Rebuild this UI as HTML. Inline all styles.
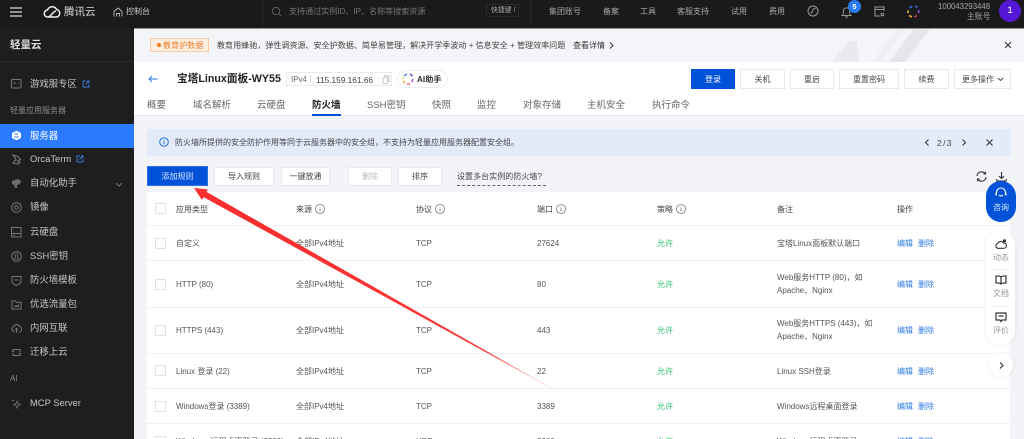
<!DOCTYPE html>
<html lang="zh"><head><meta charset="utf-8"><title>轻量云</title>
<style>
html,body{margin:0;padding:0;width:1024px;height:439px;overflow:hidden;background:#f2f4f8}
body{position:relative;font-family:"Liberation Sans","Noto Sans CJK SC",sans-serif;font-size:8px;color:#4b4b4b}
.a{position:absolute}
.t{position:absolute;line-height:20px;height:20px;white-space:nowrap}
.n{color:#c9c9c9;font-size:8px}
.s{color:#c6c6c6;font-size:9.4px}
.g{color:#8a8a8a;font-size:8px}
.tab{color:#666;font-size:9.5px}
.b{position:absolute;box-sizing:border-box;background:#fff;border:1px solid #e6e9f0;text-align:center;color:#444;font-size:8px;white-space:nowrap;padding-top:1px}
.h{color:#444;margin-top:1px}
.c{color:#555;margin-top:1px}
.ok{color:#2fc56e;margin-top:1px}
.l{color:#2f7ae5;margin-top:1px}
.cb{position:absolute;box-sizing:border-box;left:155px;width:11px;height:11px;background:#fff;border:1px solid #dfe2e9}
.line{position:absolute;left:147px;width:863px;height:1px;background:#eff1f5}
svg{position:absolute;overflow:visible}
</style></head><body>

<!-- top bar -->
<div class="a" style="left:0;top:0;width:1024px;height:28px;background:#1a1a1a"></div>
<div class="a" style="left:134px;top:28px;width:890px;height:1px;background:#8f9296"></div>
<div class="a" style="left:262px;top:0;width:1px;height:28px;background:#262626"></div>
<div class="a" style="left:530px;top:0;width:1px;height:28px;background:#262626"></div>
<svg style="left:10px;top:7px" width="13" height="10"><path d="M0 1h12M0 5h12M0 9h12" stroke="#ddd" stroke-width="1.2"/></svg>
<svg style="left:43px;top:5px" width="18" height="13" viewBox="0 0 18 13"><path d="M5 12a3.5 3.5 0 0 1-.5-7A5 5 0 0 1 13.6 4.500A3.800 3.800 0 0 1 13.500 12H5zM5 12c3-.2 5-6 8-6" fill="none" stroke="#eee" stroke-width="1.500"/></svg>
<span class="t" style="left:64px;top:2px;font-size:10.500px;color:#ddd">腾讯云</span>
<svg style="left:113px;top:7px" width="10" height="10" viewBox="0 0 10 10"><path d="M1 9.500V4.500L5 1l4 3.500v5M3.500 9.500V6.500h3v3" fill="none" stroke="#bbb" stroke-width=".9"/></svg>
<span class="t n" style="left:126px;top:2px">控制台</span>
<svg style="left:271px;top:6px" width="11" height="11" viewBox="0 0 11 11"><circle cx="5" cy="5" r="3.700" fill="none" stroke="#666" stroke-width=".9"/><path d="M8 8l2 2" stroke="#666" stroke-width=".9"/></svg>
<span class="t" style="left:289px;top:2px;color:#777;font-size:8.050px">支持通过实例ID、IP、名称等搜索资源</span>
<div class="a" style="left:486px;top:4px;width:33px;height:13px;border:1px solid #2a2a2a;box-sizing:border-box"></div>
<span class="t" style="left:491px;top:1px;color:#aaa;font-size:6.900px">快捷键 /</span>
<span class="t n" style="left:549px;top:2px;color:#aaa">集团账号</span>
<span class="t n" style="left:603px;top:2px;color:#aaa">备案</span>
<span class="t n" style="left:640px;top:2px;color:#aaa">工具</span>
<span class="t n" style="left:677px;top:2px;color:#aaa">客服支持</span>
<span class="t n" style="left:731px;top:2px;color:#aaa">试用</span>
<span class="t n" style="left:769px;top:2px;color:#aaa">费用</span>
<svg style="left:807px;top:5px" width="12" height="12" viewBox="0 0 12 12"><circle cx="6" cy="6" r="5" fill="none" stroke="#999"/><path d="M3.500 8c1.500 0 1.500-1 2.300-3C6.200 4 7 3.500 8.500 3.500" fill="none" stroke="#999"/></svg>
<svg style="left:841px;top:6px" width="11" height="12" viewBox="0 0 11 12"><path d="M1 9.500h9L8.700 8V5a3.200 3.200 0 0 0-6.400 0v3zM4 11h3" fill="none" stroke="#999" stroke-width=".9"/></svg>
<div class="a" style="left:848px;top:0;width:13px;height:13px;border-radius:50%;background:#2a7bf2;color:#fff;font-size:7.500px;font-weight:bold;line-height:13px;text-align:center">5</div>
<svg style="left:874px;top:6px" width="11" height="11" viewBox="0 0 11 11"><path d="M10 5V1H1v9h5.500M1 3.500h9" fill="none" stroke="#999"/><circle cx="8.500" cy="8.500" r="1.300" fill="none" stroke="#999"/></svg>
<svg style="left:907px;top:5px" width="13" height="13" viewBox="0 0 13 13" fill="none" stroke-width="1.600"><path d="M5 1.500L2.500 3" stroke="#3d7bf0"/><path d="M8 1l2.500 1.500" stroke="#4a62e0"/><path d="M12 5l-.5 3" stroke="#8a4ae0"/><path d="M10 10.500L7.500 12" stroke="#e04a6a"/><path d="M5 12l-3-1.500" stroke="#f0a030"/><path d="M1 8V5.500" stroke="#f0c040"/></svg>
<span class="t" style="left:938px;top:-3px;color:#a8a8a8;font-size:7.800px">100043293448</span>
<span class="t" style="left:967px;top:7px;color:#a8a8a8;font-size:7.800px">主账号</span>
<div class="a" style="left:999px;top:0;width:22px;height:22px;border-radius:50%;background:#5518d6;color:#fff;font-size:9.500px;line-height:22px;text-align:center">1</div>

<!-- sidebar -->
<div class="a" style="left:0;top:28px;width:134px;height:411px;background:#1e1e1e"></div>
<div class="a" style="left:0;top:61px;width:134px;height:1px;background:#2c2c2c"></div>
<span class="t" style="left:10px;top:35px;color:#ddd;font-size:10.500px;font-weight:bold">轻量云</span>
<svg style="left:11px;top:79px" width="11" height="10" viewBox="0 0 11 10"><rect x=".5" y=".5" width="9.500" height="8.500" rx="1" fill="none" stroke="#777"/><path d="M2.500 4h2M3.500 3v2M7 4h1" stroke="#777" stroke-width=".8"/></svg>
<span class="t s" style="left:30px;top:74px">游戏服专区</span>
<svg style="left:82px;top:80px" width="8" height="8" viewBox="0 0 8 8"><path d="M4 1H1v6h6V4M3.500 4.500L7 1M5 1h2v2" fill="none" stroke="#3a7de0" stroke-width=".9"/></svg>
<span class="t" style="left:10px;top:101px;color:#8a8a8a;font-size:8px">轻量应用服务器</span>
<div class="a" style="left:0;top:124px;width:134px;height:24px;background:#2a7bff"></div>
<svg style="left:11px;top:130px" width="11" height="11" viewBox="0 0 11 11"><path d="M5.500.8L10 3v5L5.500 10.300 1 8V3z" fill="#fff"/><path d="M3.500 4h4M3.500 6.500c1 1 3 1 4 0" stroke="#2a7bff" stroke-width="1" fill="none"/></svg>
<span class="t" style="left:30px;top:126px;color:#fff;font-size:9.400px">服务器</span>
<svg style="left:12px;top:154px" width="10" height="11" viewBox="0 0 10 11"><path d="M1 1l5 1.500 2.500 3L5.500 7 8 8.500 6 10 1 9l3-3.500z" fill="none" stroke="#777" stroke-width="1.100"/></svg>
<span class="t s" style="left:30px;top:149px">OrcaTerm</span>
<svg style="left:76px;top:155px" width="8" height="8" viewBox="0 0 8 8"><path d="M4 1H1v6h6V4M3.500 4.500L7 1M5 1h2v2" fill="none" stroke="#3a7de0" stroke-width=".9"/></svg>
<svg style="left:11px;top:178px" width="11" height="11" viewBox="0 0 11 11"><path d="M1 3l6-2 3 2-1 3-3 1v3L4 10 3 7 1 6z" fill="#6d6d6d"/></svg>
<span class="t s" style="left:30px;top:173px">自动化助手</span>
<svg style="left:115px;top:182px" width="8" height="5" viewBox="0 0 8 5"><path d="M1 1l3 3 3-3" fill="none" stroke="#777"/></svg>
<svg style="left:11px;top:202px" width="11" height="11" viewBox="0 0 11 11"><circle cx="5.500" cy="5.500" r="4.800" fill="none" stroke="#777"/><circle cx="5.500" cy="5.500" r="1.800" fill="none" stroke="#777"/></svg>
<span class="t s" style="left:30px;top:197px">镜像</span>
<svg style="left:11px;top:227px" width="11" height="11" viewBox="0 0 11 11"><rect x=".5" y=".5" width="9.500" height="9.500" fill="none" stroke="#777"/><path d="M.5 6.500h9.500M2 8.300h2" stroke="#777"/></svg>
<span class="t s" style="left:30px;top:222px">云硬盘</span>
<svg style="left:11px;top:251px" width="11" height="11" viewBox="0 0 11 11"><circle cx="5.500" cy="5.500" r="4.800" fill="none" stroke="#777"/><path d="M3.500 8h4L6.500 5.500a1.500 1.500 0 1 0-2 0z" fill="none" stroke="#777" stroke-width=".8"/></svg>
<span class="t s" style="left:30px;top:246px">SSH密钥</span>
<svg style="left:11px;top:275px" width="11" height="11" viewBox="0 0 11 11"><path d="M1 1.500h9V6c0 2-2 3.500-4.500 4.500C3 9.500 1 8 1 6z" fill="none" stroke="#777"/><path d="M3.500 5h4" stroke="#777"/></svg>
<span class="t s" style="left:30px;top:270px">防火墙模板</span>
<svg style="left:11px;top:299px" width="11" height="11" viewBox="0 0 11 11"><path d="M1 2h3.500l1 1.300H10V10H1z" fill="none" stroke="#777"/><path d="M3 8l2-2 1 1 2-2v3z" fill="#777"/></svg>
<span class="t s" style="left:30px;top:294px">优选流量包</span>
<svg style="left:11px;top:323px" width="11" height="11" viewBox="0 0 11 11"><path d="M3.500 9A3 3 0 0 1 3 3.200a3 3 0 0 1 5.500.3A2.800 2.800 0 0 1 8 9M5.500 10V5.500M4 7l1.500-1.500L7 7" fill="none" stroke="#777"/></svg>
<span class="t s" style="left:30px;top:318px">内网互联</span>
<svg style="left:11px;top:347px" width="11" height="11" viewBox="0 0 11 11"><path d="M2 4.500V2.500h7V5M9 6.500v2H2V6M1 5l1-1 1 1M8 6l1 1 1-1" fill="none" stroke="#777"/></svg>
<span class="t s" style="left:30px;top:342px">迁移上云</span>
<span class="t" style="left:10px;top:369px;color:#8a8a8a;font-size:8px">AI</span>
<svg style="left:11px;top:398px" width="11" height="11" viewBox="0 0 11 11"><path d="M6 3l1 2.500L9.500 6.500 7 7.500 6 10 5 7.500 2.500 6.500 5 5.500zM2 1.500v2M1 2.500h2" fill="none" stroke="#777" stroke-width=".8"/></svg>
<span class="t s" style="left:30px;top:393px">MCP Server</span>
<span class="t" style="left:10px;top:428px;color:#8a8a8a;font-size:8px">组织协作</span>
<div class="a" style="left:0;top:432px;width:134px;height:7px;background:#1e1e1e"></div>

<!-- banner -->
<div class="a" style="left:134px;top:29px;width:890px;height:33px;background:#f4f5f8;overflow:hidden">
<svg style="left:620px;top:0" width="200" height="33"><path d="M78 33l16-20 9-2 2 22z" fill="#e9eaee"/><path d="M135 33L160 0h16l-25 33z" fill="#e4e6ea"/><path d="M118 33L143 0h8l-25 33z" fill="#eeeff2"/></svg>
</div>
<div class="a" style="left:150px;top:38px;width:59px;height:14px;box-sizing:border-box;background:#fdeee2;border:1px solid #f8c9a3"></div>
<div class="a" style="left:157px;top:43px;width:4px;height:4px;border-radius:50%;background:#ee7a22"></div>
<span class="t" style="left:163px;top:36px;color:#e8802f;font-size:8.100px">教育护数据</span>
<span class="t" style="left:217px;top:36px;color:#444;font-size:8.050px">教育用蜂驰，弹性调资源、安全护数据、简单易管理，解决开学季波动 + 信息安全 + 管理效率问题</span>
<span class="t" style="left:573px;top:36px;color:#333;font-size:8px">查看详情</span>
<svg style="left:609px;top:42px" width="5" height="7" viewBox="0 0 5 7"><path d="M1 .5l3 3-3 3" fill="none" stroke="#333"/></svg>
<svg style="left:1004px;top:41px" width="8" height="8" viewBox="0 0 8 8"><path d="M1 1l6 6M7 1L1 7" stroke="#333" stroke-width="1.100"/></svg>

<!-- header -->
<div class="a" style="left:134px;top:62px;width:890px;height:53px;background:#fff"></div>
<div class="a" style="left:134px;top:115px;width:890px;height:1px;background:#e8eaef"></div>
<svg style="left:148px;top:75px" width="10" height="8" viewBox="0 0 10 8"><path d="M9.500 4H1M4 1L1 4l3 3" fill="none" stroke="#2470e0" stroke-width=".9"/></svg>
<span class="t" style="left:177px;top:69px;color:#222;font-size:10.700px;font-weight:bold">宝塔Linux面板-WY55</span>
<div class="a" style="left:286px;top:72px;width:106px;height:14px;box-sizing:border-box;border:1px solid #e8eaee;background:#fff"></div>
<span class="t" style="left:291px;top:70px;color:#666;font-size:8px">IPv4</span>
<div class="a" style="left:310px;top:75px;width:1px;height:8px;background:#ddd"></div>
<span class="t" style="left:316px;top:70px;color:#444;font-size:8.300px">115.159.161.66</span>
<svg style="left:382px;top:75px" width="8" height="9" viewBox="0 0 8 9"><path d="M2.500 2V.8H7v5.500H5.500M1 2.500h4.500v6H1z" fill="none" stroke="#bbb" stroke-width=".8"/></svg>
<div class="a" style="left:397px;top:70px;width:51px;height:18px;box-sizing:border-box;border:1px solid #eceef3;border-radius:9px;background:#fff"></div>
<svg style="left:402px;top:73px" width="12" height="12" viewBox="0 0 12 12" fill="none" stroke-width="1.500"><path d="M2 3l3-2" stroke="#4a8af0"/><path d="M8 1l2.500 2" stroke="#5a5ae0"/><path d="M11 6l-1 3" stroke="#a055d8"/><path d="M8 11H5" stroke="#ee6a70"/><path d="M3 10L1 8" stroke="#f3a63a"/><path d="M1 6V4.500" stroke="#f4cc50"/></svg>
<span class="t" style="left:417px;top:70px;color:#333;font-size:8.200px;font-weight:bold">AI助手</span>

<div class="b" style="left:691px;top:69px;width:44px;height:20px;line-height:17px;background:#0052d9;border-color:#0052d9;color:#fff">登录</div>
<div class="b" style="left:740px;top:69px;width:45px;height:20px;line-height:17px">关机</div>
<div class="b" style="left:790px;top:69px;width:44px;height:20px;line-height:17px">重启</div>
<div class="b" style="left:839px;top:69px;width:60px;height:20px;line-height:17px">重置密码</div>
<div class="b" style="left:904px;top:69px;width:45px;height:20px;line-height:17px">续费</div>
<div class="b" style="left:954px;top:69px;width:57px;height:20px;line-height:17px;text-align:left;padding-left:7px">更多操作</div>
<svg style="left:997px;top:77px" width="7" height="5" viewBox="0 0 7 5"><path d="M.8 1l2.700 2.500L6.200 1" fill="none" stroke="#444"/></svg>

<span class="t tab" style="left:147px;top:96px">概要</span>
<span class="t tab" style="left:193px;top:96px">域名解析</span>
<span class="t tab" style="left:257px;top:96px">云硬盘</span>
<span class="t tab" style="left:312px;top:96px;color:#222;font-weight:bold">防火墙</span>
<div class="a" style="left:312px;top:114px;width:29px;height:1.500px;background:#0052d9"></div>
<span class="t tab" style="left:367px;top:96px">SSH密钥</span>
<span class="t tab" style="left:432px;top:96px">快照</span>
<span class="t tab" style="left:477px;top:96px">监控</span>
<span class="t tab" style="left:523px;top:96px">对象存储</span>
<span class="t tab" style="left:587px;top:96px">主机安全</span>
<span class="t tab" style="left:652px;top:96px">执行命令</span>

<!-- notice -->
<div class="a" style="left:147px;top:129px;width:864px;height:27px;background:#e3ebfb"></div>
<svg style="left:159px;top:137px" width="10" height="10" viewBox="0 0 10 10"><circle cx="5" cy="5" r="4.300" fill="none" stroke="#2470e0"/><path d="M5 4.300v3M5 2.500v1" stroke="#2470e0"/></svg>
<span class="t" style="left:175px;top:133px;color:#444;font-size:8px">防火墙所提供的安全防护作用等同于云服务器中的安全组，不支持为轻量应用服务器配置安全组。</span>
<svg style="left:925px;top:139px" width="4" height="7" viewBox="0 0 4 7"><path d="M3.500.5l-3 3 3 3" fill="none" stroke="#333"/></svg>
<span class="t" style="left:937px;top:133px;color:#444;font-size:8.500px;word-spacing:-1px">2 / 3</span>
<svg style="left:962px;top:139px" width="4" height="7" viewBox="0 0 4 7"><path d="M.5.500l3 3-3 3" fill="none" stroke="#333"/></svg>
<svg style="left:986px;top:139px" width="7" height="7" viewBox="0 0 7 7"><path d="M.5.500l6 6M6.500.500l-6 6" stroke="#333"/></svg>

<!-- toolbar -->
<div class="b" style="left:147px;top:166px;width:61px;height:20px;line-height:18px;background:#0052d9;border-color:#2a70e0;color:#d8e6ff">添加规则</div>
<div class="b" style="left:214px;top:167px;width:60px;height:19px;line-height:16px">导入规则</div>
<div class="b" style="left:281px;top:167px;width:49px;height:19px;line-height:16px">一键放通</div>
<div class="b" style="left:348px;top:167px;width:44px;height:19px;line-height:16px;color:#bbb">删除</div>
<div class="b" style="left:398px;top:167px;width:44px;height:19px;line-height:16px">排序</div>
<span class="t" style="left:457px;top:167px;color:#444;font-size:8.050px">设置多台实例的防火墙?</span>
<div class="a" style="left:457px;top:185px;width:89px;border-top:1px dashed #666"></div>
<svg style="left:976px;top:171px" width="11" height="11" viewBox="0 0 11 11"><path d="M1 5a4.500 4.500 0 0 1 8-2.500M10 6a4.500 4.500 0 0 1-8 2.500M9.500 .8v2.200H7.300M1.500 10.200V8h2.200" fill="none" stroke="#333" stroke-width="1.100"/></svg>
<svg style="left:996px;top:171px" width="11" height="11" viewBox="0 0 11 11"><path d="M5.500 1v6M3 5l2.500 2.500L8 5M.8 8v2h9.400V8" fill="none" stroke="#333" stroke-width="1.100"/></svg>

<!-- table -->
<div class="a" style="left:147px;top:192px;width:863px;height:247px;background:#fff"></div>
<div class="line" style="top:225px"></div><div class="line" style="top:260px"></div><div class="line" style="top:307px"></div><div class="line" style="top:353px"></div><div class="line" style="top:388px"></div><div class="line" style="top:423px"></div>

<div class="cb" style="top:203px"></div>
<span class="t h" style="left:176px;top:199px">应用类型</span>
<span class="t h" style="left:296px;top:199px">来源</span>
<span class="t h" style="left:416px;top:199px">协议</span>
<span class="t h" style="left:537px;top:199px">端口</span>
<span class="t h" style="left:657px;top:199px">策略</span>
<span class="t h" style="left:777px;top:199px">备注</span>
<span class="t h" style="left:897px;top:199px">操作</span>
<svg style="left:315px;top:204px" width="10" height="10" viewBox="0 0 10 10"><circle cx="5" cy="5" r="4.500" fill="none" stroke="#777" stroke-width=".8"/><path d="M5 4.300v3.300M5 2.400v1" stroke="#777" stroke-width=".8"/></svg>
<svg style="left:435px;top:204px" width="10" height="10" viewBox="0 0 10 10"><circle cx="5" cy="5" r="4.500" fill="none" stroke="#777" stroke-width=".8"/><path d="M5 4.300v3.300M5 2.400v1" stroke="#777" stroke-width=".8"/></svg>
<svg style="left:556px;top:204px" width="10" height="10" viewBox="0 0 10 10"><circle cx="5" cy="5" r="4.500" fill="none" stroke="#777" stroke-width=".8"/><path d="M5 4.300v3.300M5 2.400v1" stroke="#777" stroke-width=".8"/></svg>
<svg style="left:676px;top:204px" width="10" height="10" viewBox="0 0 10 10"><circle cx="5" cy="5" r="4.500" fill="none" stroke="#777" stroke-width=".8"/><path d="M5 4.300v3.300M5 2.400v1" stroke="#777" stroke-width=".8"/></svg>

<!-- row 1 -->
<div class="cb" style="top:238px"></div>
<span class="t c" style="left:176px;top:233px">自定义</span>
<span class="t c" style="left:296px;top:233px">全部IPv4地址</span>
<span class="t c" style="left:416px;top:233px">TCP</span>
<span class="t c" style="left:537px;top:233px">27624</span>
<span class="t ok" style="left:657px;top:233px">允许</span>
<span class="t c" style="left:777px;top:233px">宝塔Linux面板默认端口</span>
<span class="t l" style="left:897px;top:233px">编辑</span><span class="t l" style="left:918px;top:233px">删除</span>
<!-- row 2 -->
<div class="cb" style="top:279px"></div>
<span class="t c" style="left:176px;top:274px">HTTP (80)</span>
<span class="t c" style="left:296px;top:274px">全部IPv4地址</span>
<span class="t c" style="left:416px;top:274px">TCP</span>
<span class="t c" style="left:537px;top:274px">80</span>
<span class="t ok" style="left:657px;top:274px">允许</span>
<span class="t c" style="left:777px;top:267px">Web服务HTTP (80)，如</span>
<span class="t c" style="left:777px;top:280px">Apache、Nginx</span>
<span class="t l" style="left:897px;top:274px">编辑</span><span class="t l" style="left:918px;top:274px">删除</span>
<!-- row 3 -->
<div class="cb" style="top:325px"></div>
<span class="t c" style="left:176px;top:320px">HTTPS (443)</span>
<span class="t c" style="left:296px;top:320px">全部IPv4地址</span>
<span class="t c" style="left:416px;top:320px">TCP</span>
<span class="t c" style="left:537px;top:320px">443</span>
<span class="t ok" style="left:657px;top:320px">允许</span>
<span class="t c" style="left:777px;top:313px">Web服务HTTPS (443)，如</span>
<span class="t c" style="left:777px;top:326px">Apache、Nginx</span>
<span class="t l" style="left:897px;top:320px">编辑</span><span class="t l" style="left:918px;top:320px">删除</span>
<!-- row 4 -->
<div class="cb" style="top:365px"></div>
<span class="t c" style="left:176px;top:361px">Linux 登录 (22)</span>
<span class="t c" style="left:296px;top:361px">全部IPv4地址</span>
<span class="t c" style="left:416px;top:361px">TCP</span>
<span class="t c" style="left:537px;top:361px">22</span>
<span class="t ok" style="left:657px;top:361px">允许</span>
<span class="t c" style="left:777px;top:361px">Linux SSH登录</span>
<span class="t l" style="left:897px;top:361px">编辑</span><span class="t l" style="left:918px;top:361px">删除</span>
<!-- row 5 -->
<div class="cb" style="top:401px"></div>
<span class="t c" style="left:176px;top:396px">Windows登录 (3389)</span>
<span class="t c" style="left:296px;top:396px">全部IPv4地址</span>
<span class="t c" style="left:416px;top:396px">TCP</span>
<span class="t c" style="left:537px;top:396px">3389</span>
<span class="t ok" style="left:657px;top:396px">允许</span>
<span class="t c" style="left:777px;top:396px">Windows远程桌面登录</span>
<span class="t l" style="left:897px;top:396px">编辑</span><span class="t l" style="left:918px;top:396px">删除</span>
<!-- row 6 -->
<div class="cb" style="top:436px"></div>
<span class="t c" style="left:176px;top:431px">Windows 远程桌面登录 (3389)</span>
<span class="t c" style="left:296px;top:431px">全部IPv4地址</span>
<span class="t c" style="left:416px;top:431px">UDP</span>
<span class="t c" style="left:537px;top:431px">3389</span>
<span class="t ok" style="left:657px;top:431px">允许</span>
<span class="t c" style="left:777px;top:431px">Windows远程桌面登录</span>
<span class="t l" style="left:897px;top:431px">编辑</span><span class="t l" style="left:918px;top:431px">删除</span>

<!-- floating -->
<div class="a" style="left:986px;top:181px;width:30px;height:41px;border-radius:15px;background:#0052d9"></div>
<svg style="left:995px;top:187px" width="12" height="13" viewBox="0 0 12 13"><path d="M1.500 8V5.500a4.500 4.500 0 0 1 9 0V8M1 5.500v3M11 5.500v3M4 8c1 1.300 3 1.300 4 0" fill="none" stroke="#fff" stroke-width="1.100"/></svg>
<span class="t" style="left:993px;top:198px;color:#e6eeff;font-size:8px">咨询</span>
<div class="a" style="left:986px;top:231px;width:29px;height:114px;border-radius:15px;background:#fff;box-shadow:0 1px 6px rgba(0,0,0,.07)"></div>
<svg style="left:995px;top:239px" width="12" height="10" viewBox="0 0 12 10"><path d="M3 9.300a2.400 2.400 0 0 1-.3-4.700 3.300 3.300 0 0 1 6-.5 2.600 2.600 0 0 1 .3 5.200z" fill="none" stroke="#333" stroke-width="1.100"/><circle cx="9.500" cy="1.800" r="1.600" fill="#333"/></svg>
<span class="t g" style="left:993px;top:248px;color:#999">动态</span>
<div class="a" style="left:992px;top:269px;width:17px;height:1px;background:#eee"></div>
<svg style="left:995px;top:275px" width="12" height="10" viewBox="0 0 12 10"><path d="M6 2C5 1 3 .8 1 1v7c2-.2 4 0 5 1 1-1 3-1.200 5-1V1C9 .8 7 1 6 2zM6 2v7" fill="none" stroke="#333" stroke-width="1.200"/></svg>
<span class="t g" style="left:993px;top:284px;color:#999">文档</span>
<div class="a" style="left:992px;top:306px;width:17px;height:1px;background:#eee"></div>
<svg style="left:995px;top:312px" width="12" height="11" viewBox="0 0 12 11"><path d="M1 1h10v7H7L6 9.500 5 8H1zM3.500 4h5" fill="none" stroke="#333" stroke-width="1.200"/></svg>
<span class="t g" style="left:993px;top:321px;color:#999">评价</span>
<div class="a" style="left:989px;top:353px;width:24px;height:24px;border-radius:50%;background:#fff;box-shadow:0 1px 6px rgba(0,0,0,.07)"></div>
<svg style="left:999px;top:362px" width="5" height="7" viewBox="0 0 5 7"><path d="M1 .5l3 3-3 3" fill="none" stroke="#333" stroke-width="1.100"/></svg>

<!-- red arrow -->
<svg style="left:0;top:0" width="1024" height="439" viewBox="0 0 1024 439">
<defs><linearGradient id="ar" gradientUnits="userSpaceOnUse" x1="194" y1="188" x2="569" y2="398"><stop offset="0" stop-color="#f92f2f"/><stop offset=".78" stop-color="#fb3535"/><stop offset="1" stop-color="#ff6a6a" stop-opacity=".15"/></linearGradient></defs>
<path d="M194 188L208 189.500 206.500 191.900 569 398 203.500 197.100 202 200z" fill="url(#ar)"/>
</svg>
</body></html>
